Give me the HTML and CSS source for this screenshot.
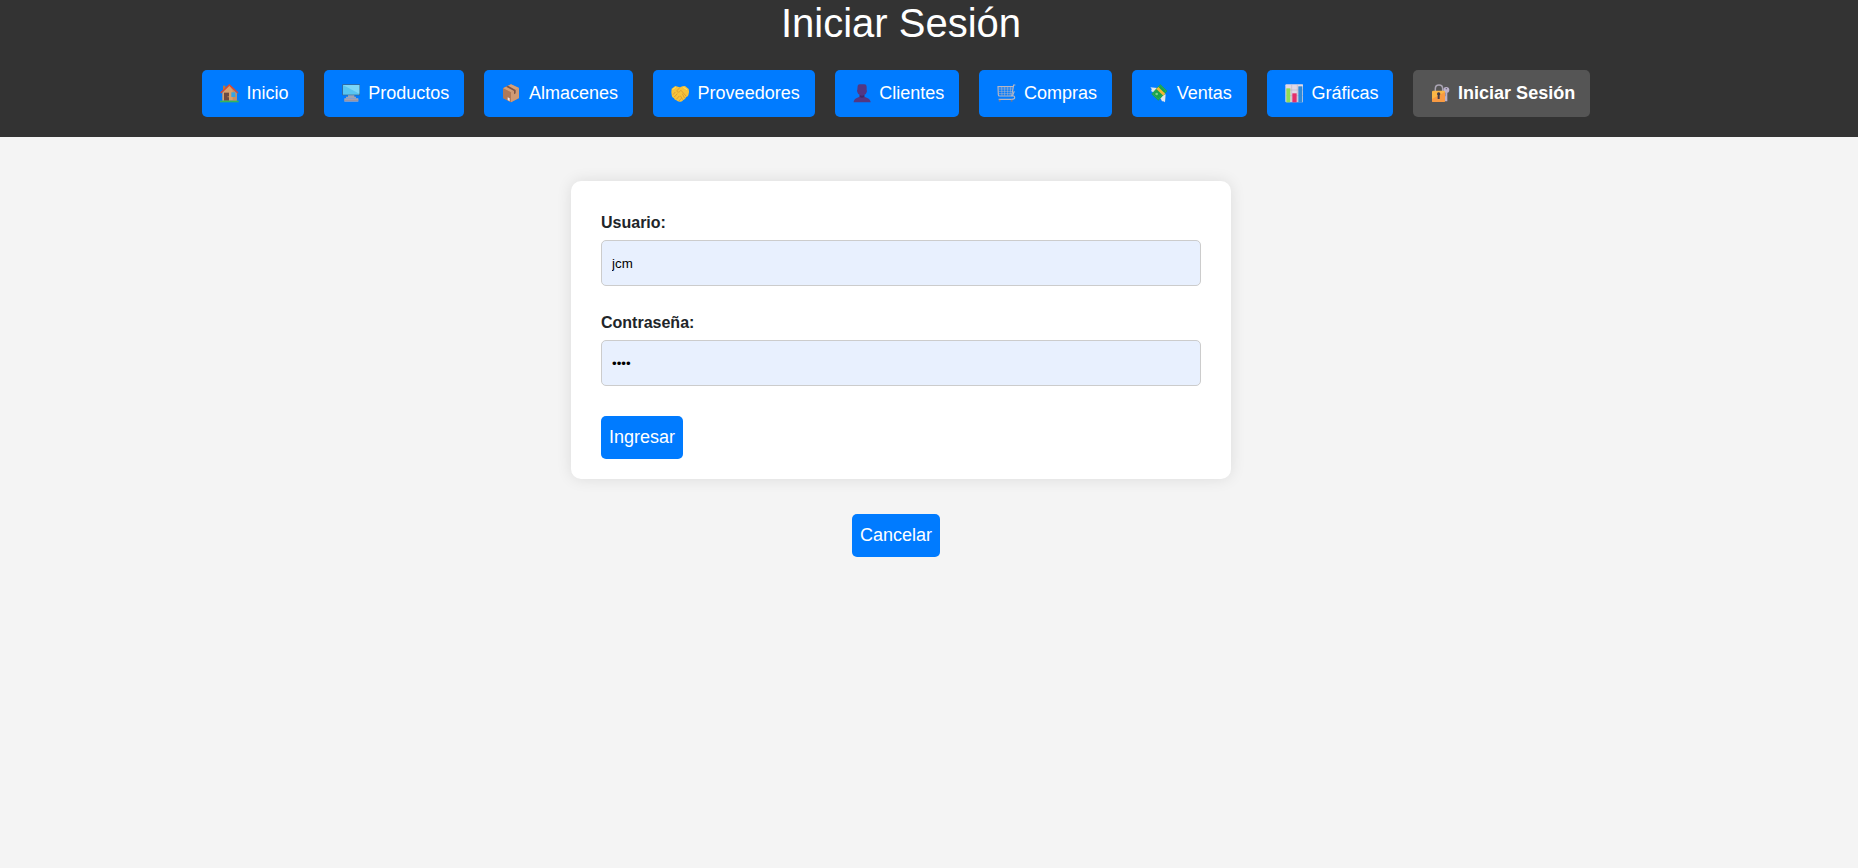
FILE: index.html
```html
<!DOCTYPE html>
<html lang="es">
<head>
<meta charset="utf-8">
<title>Iniciar Sesión</title>
<link rel="stylesheet" href="styles.css">
</head>
<body>
<header class="header">
  <h1 class="title">Iniciar Sesión</h1>
  <nav class="nav">
    <a class="nav-link"><svg class="icon" viewBox="0 0 56 56"><path d="M9 5h7v16H9z" fill="#b9793f"/><path d="M28 4 50 27v23H7V26z" fill="#d9a16c"/><path d="M28 4 50 27v23H38V20z" fill="#c98f62"/><path d="M2 27 28 3l26 24" fill="none" stroke="#e2482d" stroke-width="4.5"/><path d="M12 26h15v24H12z" fill="#6e4a42"/><path d="M23 37h3v3h-3z" fill="#d6a45c"/><path d="M34 25h12v14H34z" fill="#35a6e5"/><path d="M0 50h56v5H0z" fill="#36b65a"/></svg><span>Inicio</span></a>
    <a class="nav-link"><svg class="icon" viewBox="0 0 56 56"><path d="M1 1h54v33H1z" fill="#46657d"/><path d="M3 3h49v29H3z" fill="#57c5f2"/><path d="M3 3 52 29V3z" fill="#7cd6f7"/><path d="M18 34h19v4h5v5H12v-5h6z" fill="#9da3b4"/><path d="M7 43h42v10H7z" fill="#b5adb9"/><path d="M7 47h42v3H7z" fill="#8b8797"/></svg><span>Productos</span></a>
    <a class="nav-link"><svg class="icon" viewBox="0 0 56 56"><path d="M27 1 51 12v30L27 55 3 42V13z" fill="#bb8462"/><path d="M3 13 27 1l24 11-24 13z" fill="#d5a078"/><path d="M3 13 27 25v30L3 42z" fill="#ae7958"/><path d="M27 25 51 12v30L27 55z" fill="#d09a74"/><path d="m12 8 24 13v10l5-3V18L18 5z" fill="#7c5549"/><path d="m17 40 6 3v9l-6-4z" fill="#eee5ec"/></svg><span>Almacenes</span></a>
    <a class="nav-link"><svg class="icon" viewBox="0 0 56 56"><path d="M2 14 13 6q8 2 14 4 7-4 15-4l11 9q3 10-1 19-2 5-7 6-2 7-8 8-4 7-11 5-6 0-10-4-6-1-7-6-7-3-7-10Q0 24 2 14z" fill="#f6c33a"/><path d="m27 10-10 11c4 6 9 3 13-2l16 18M6 32l7-8M10 39l9-10m-3 17 9-10m-1 15 7-8M34 29l7 14M28 35l7 12" fill="none" stroke="#cf8d2d" stroke-width="2"/><path d="M5 16l9-6M37 10l11 7" fill="none" stroke="#ffe16a" stroke-width="3"/></svg><span>Proveedores</span></a>
    <a class="nav-link"><svg class="icon" viewBox="0 0 56 56"><path d="M14 5Q16 1 21 1h13q7 0 7 7v10q2 2 0 7-2 6-7 8v5c10 3 19 8 19 17H2c0-9 8-14 18-17v-5q-6-3-7-9-2-4 0-7z" fill="#533783"/><path d="M20 33q7 5 14 0v6q-7 4-14 0z" fill="#3f2968"/></svg><span>Clientes</span></a>
    <a class="nav-link"><svg class="icon" viewBox="0 0 56 56"><g fill="none" stroke="#b9b7c2"><path d="M55 3h-5l-6 33H8Q4 36 4 32L3 8h45" stroke-width="3.5"/><path d="M5 15h42M5 22h40M5 29h39M14 9l1 26M23 9v26M32 9v26M41 9l-2 26" stroke-width="1.7"/><path d="m46 36 6-14M44 36q8-2 9 4t-9 6H5" stroke-width="3.5"/></g><circle cx="8" cy="50" r="3" fill="#77798c"/><circle cx="44" cy="50" r="3" fill="#77798c"/></svg><span>Compras</span></a>
    <a class="nav-link"><svg class="icon" viewBox="0 0 56 56"><path d="m1 10 28 3-17 17Q9 23 3 21q5-4-2-11z" fill="#e3e6ea"/><path d="m26 39 21-8-2 24q-4-5-9-3-1-7-10-13z" fill="#e3e6ea"/><path d="M31 1 52 21 25 50 4 30z" fill="#18a34c"/><path d="M31 5 48 21 25 45 8 30z" fill="none" stroke="#3fb566" stroke-width="1.5"/><path d="m19 15 6-6 21 20-6 6z" fill="#f3b833"/><circle cx="20" cy="30" r="4" fill="#7bd08d"/></svg><span>Ventas</span></a>
    <a class="nav-link"><svg class="icon" viewBox="0 0 56 56"><rect x="1" y="1" width="54" height="54" rx="3" fill="#e0d8e5"/><path d="M2 18h52M2 35h52M20 2v52M37 2v52" stroke="#b8acc3" stroke-width="1.5"/><path d="M4 13h12v42H4z" fill="#91dc55"/><path d="M22 28h13v27H22z" fill="#e52e69"/><path d="M40 7h12v48H40z" fill="#318bd7"/></svg><span>Gráficas</span></a>
    <a class="nav-link active"><svg class="icon" viewBox="0 0 56 56"><path d="M13 24V14q0-11 11-11t11 11v10" fill="none" stroke="#aaa4b3" stroke-width="4.5"/><circle cx="46" cy="18" r="9" fill="#bbb1cc"/><path d="M43 26h6v26h-7V42h-3v-5h4z" fill="#bbb1cc"/><circle cx="46" cy="14" r="2" fill="#5d5767"/><rect x="3" y="20" width="39" height="34" rx="4" fill="#fbb746"/><path d="M3 45 42 24v26q0 4-4 4H7q-4 0-4-4z" fill="#f99a42"/><path d="M23 25a5 5 0 0 1 3 9v11h-6V34a5 5 0 0 1 3-9z" fill="#423c49"/></svg><span>Iniciar Sesión</span></a>
  </nav>
</header>
<main class="main">
  <form class="card">
    <label class="label" for="user">Usuario:</label>
    <input class="field" id="user" type="text" value="jcm">
    <label class="label" for="pass">Contraseña:</label>
    <input class="field" id="pass" type="password" value="1234">
    <button class="button" type="button">Ingresar</button>
  </form>
  <a class="button cancel">Cancelar</a>
</main>
</body>
</html>
```
FILE: styles.css
```css
* { box-sizing: border-box; }
body {
  margin: 0;
  min-height: 100vh;
  background: #f4f4f4;
  color: #212529;
  font-family: Arial, "Liberation Sans", sans-serif;
}
.header {
  height: 137px;
  padding-right: 56px;
  background: #333;
  color: #fff;
}
.title {
  margin: 0 0 24px;
  font-size: 40px;
  font-weight: 400;
  line-height: 46px;
  text-align: center;
}
.nav {
  display: flex;
  justify-content: center;
  gap: 20px;
  padding-right: 10px;
}
.nav-link {
  display: flex;
  align-items: center;
  height: 47px;
  padding: 0 15px;
  border-radius: 5px;
  background: #007bff;
  color: #fff;
  font-size: 18px;
  line-height: 27px;
  white-space: nowrap;
}
.nav-link.active { background: #555; font-weight: 700; }
.icon { width: 18.67px; height: 18.67px; margin: 0 8px 0 3px; flex: none; }
.main {
  display: flex;
  flex-direction: column;
  align-items: center;
  padding: 44px 56px 0 0;
}
.card {
  display: flex;
  flex-direction: column;
  align-items: flex-start;
  width: 660px;
  padding: 30px 30px 20px;
  border-radius: 10px;
  background: #fff;
  box-shadow: 0 0 15px rgba(0, 0, 0, .1);
}
.label {
  margin-bottom: 5px;
  font-size: 16px;
  font-weight: 700;
  line-height: 24px;
}
.field {
  flex: none;
  width: 100%;
  height: 46px;
  margin: 0 0 25px;
  padding: 0 10px;
  border: 1px solid #ccc;
  border-radius: 5px;
  background: #e8f0fe;
  color: #000;
  font: 13.333px Arial, "Liberation Sans", sans-serif;
}
.button {
  height: 43px;
  margin-top: 5px;
  padding: 0 8px;
  border: 0;
  border-radius: 5px;
  background: #007bff;
  color: #fff;
  font: 18px/43px Arial, "Liberation Sans", sans-serif;
}
.cancel { margin: 35px 10px 0 0; }
```
